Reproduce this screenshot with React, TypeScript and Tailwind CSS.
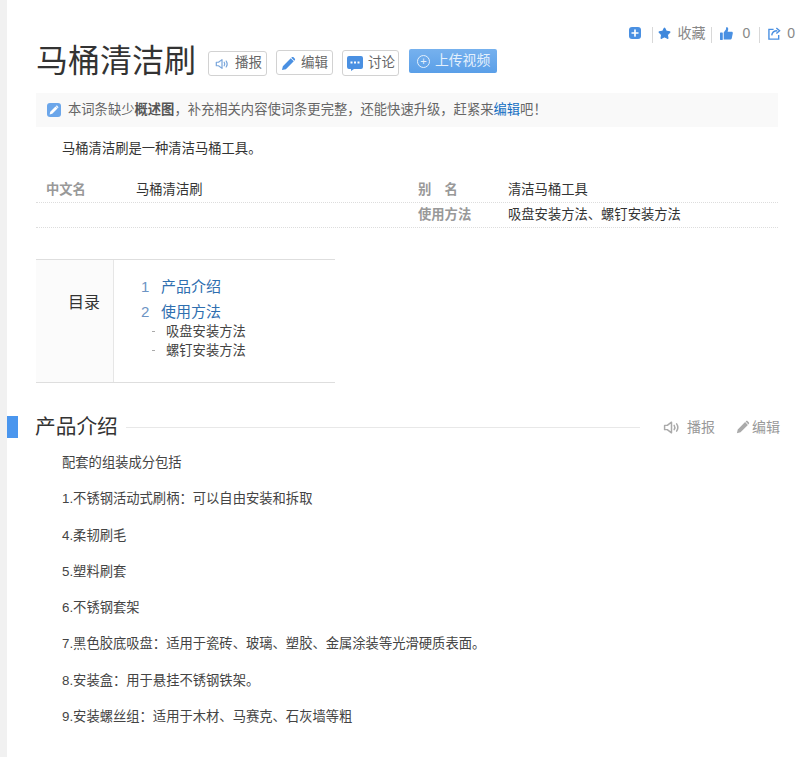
import { Plus, Star } from "lucide-react"

const cjk = { fontFamily: '"Liberation Sans", "Noto Sans CJK SC", sans-serif' }

function Speaker({ className }: { className: string }) {
  return (
    <svg viewBox="0 0 16 16" className={className} fill="none" stroke="currentColor" strokeWidth="1.4">
      <path d="M1.5 6v4h2.5l4 3V3l-4 3z" strokeLinejoin="round" />
      <path d="M10.5 6c.8 1.2.8 2.8 0 4M12.8 4.6c1.4 2.1 1.4 4.7 0 6.8" strokeLinecap="round" />
    </svg>
  )
}

function PencilSolid({ className }: { className: string }) {
  return (
    <svg viewBox="0 0 16 16" className={className} fill="currentColor">
      <path d="M1 15l1-4.2L10.4 2.4l3.2 3.2L5.2 14zM11.4 1.4c.6-.6 1.4-.6 2 0l1.2 1.2c.6.6.6 1.4 0 2l-.4.4L11 1.8z" />
    </svg>
  )
}

function Bubble() {
  return (
    <svg viewBox="0 0 16 15" className="h-[15px] w-[16px] text-[#4a90e2]" fill="currentColor">
      <path d="M2 0h12a2 2 0 0 1 2 2v9a2 2 0 0 1-2 2H7l-3 2v-2H2a2 2 0 0 1-2-2V2a2 2 0 0 1 2-2z" />
      <rect x="3.500" y="5.500" width="2" height="2" fill="#fff" />
      <rect x="7" y="5.500" width="2" height="2" fill="#fff" />
      <rect x="10.500" y="5.500" width="2" height="2" fill="#fff" />
    </svg>
  )
}

function ThumbSolid({ className }: { className: string }) {
  return (
    <svg viewBox="0 0 14 14" className={className} fill="currentColor">
      <rect x="0" y="6" width="3" height="8" rx="0.5" />
      <path d="M4 6l2.500-3.500V.8c0-.6 1.900-.8 2.300.8.2 1-.2 2.300-.6 3.400h4.300c.9 0 1.500.7 1.300 1.600l-1.200 5.800c-.2.700-.7 1.100-1.400 1.100H4z" />
    </svg>
  )
}

function ShareBox({ className }: { className: string }) {
  return (
    <svg viewBox="0 0 14 14" className={className} fill="none" stroke="currentColor" strokeWidth="1.500">
      <path d="M6 2.500H1v10.500h10.500V8.500" />
      <path d="M4 9c.4-3 2.800-5 6-5M9 1l3.500 3L9 7" />
    </svg>
  )
}

function TitleButton({ icon, label, className }: { icon: React.ReactNode; label: string; className: string }) {
  return (
    <span className={`flex items-center rounded-[3px] border border-[#d2d2d2] bg-white text-[13.5px] text-[#666] ${className}`}>
      {icon}
      {label}
    </span>
  )
}

function Divider({ className }: { className: string }) {
  return <span className={`mt-[3px] h-[16px] w-px bg-[#d8d8d8] ${className}`} />
}

function InfoRow({ label, value }: { label: string; value: string }) {
  return (
    <div className="flex">
      <span className="w-[100px] pl-[10px] font-bold text-[#999]">{label}</span>
      <span className="text-[#333]">{value}</span>
    </div>
  )
}

const paragraphs = [
  "配套的组装成分包括",
  "1.不锈钢活动式刷柄：可以自由安装和拆取",
  "4.柔韧刷毛",
  "5.塑料刷套",
  "6.不锈钢套架",
  "7.黑色胶底吸盘：适用于瓷砖、玻璃、塑胶、金属涂装等光滑硬质表面。",
  "8.安装盒：用于悬挂不锈钢铁架。",
  "9.安装螺丝组：适用于木材、马赛克、石灰墙等粗",
]

export default function App() {
  return (
    <div className="h-[757px] w-[800px] overflow-hidden bg-white text-[13.3px] text-[#333]" style={cjk}>
      <div className="h-full border-l-[7px] border-[#f1f1f1]">
        <div className="flex h-[40px] items-center justify-end pt-[26px] pr-[5px] text-[14px] leading-[14px] text-[#888]">
          <span className="flex h-[12px] w-[12px] items-center justify-center rounded-[3px] bg-[#4a90e2]">
            <Plus className="h-[10px] w-[10px] text-white" strokeWidth={4} />
          </span>
          <Divider className="ml-[11px] mr-[5px]" />
          <Star className="mr-[6px] h-[13px] w-[13px] fill-[#3f88dc] text-[#3f88dc]" />
          <span>收藏</span>
          <Divider className="ml-[6px] mr-[8px]" />
          <ThumbSolid className="mr-[9px] h-[13px] w-[13px] text-[#4a90e2]" />
          <span>0</span>
          <Divider className="ml-[9px] mr-[8px]" />
          <ShareBox className="mr-[6px] h-[13px] w-[13px] text-[#4a90e2]" />
          <span>0</span>
        </div>

        <div className="pl-[29px] pr-[22px]">
          <div className="flex h-[42px] items-center">
            <h1 className="mr-[12px] text-[32px] leading-[42px] font-normal text-[#333]">马桶清洁刷</h1>
            <TitleButton className="mt-[5px] h-[25px] w-[59px] gap-[6px] pl-[6px]" label="播报" icon={<Speaker className="h-[14px] w-[14px] text-[#7ba7dc]" />} />
            <TitleButton className="ml-[9px] mt-[2px] h-[25px] w-[57px] gap-[5px] pl-[4px] pt-[2px]" label="编辑" icon={<PencilSolid className="h-[15px] w-[15px] text-[#4a90e2]" />} />
            <TitleButton className="ml-[9px] mt-[4px] h-[26px] w-[57px] gap-[5px] pl-[4px]" label="讨论" icon={<Bubble />} />
            <span className="ml-[10px] flex h-[24px] w-[88px] items-center gap-[5px] rounded-[2px] bg-gradient-to-b from-[#76b1ee] to-[#5a9fe8] pl-[8px] text-[13.8px] text-[#e4f0fc]">
              <span className="flex h-[13px] w-[13px] items-center justify-center rounded-full border border-[#e4f0fc] text-[11px] leading-none">+</span>
              上传视频
            </span>
          </div>

          <div className="mt-[11px] flex h-[34px] items-center bg-[#f9f9f9] pl-[11px] text-[#666]">
            <span className="mr-[7px] flex h-[14px] w-[14px] items-center justify-center rounded-[3px] bg-[#6ba6ea]">
              <PencilSolid className="h-[10px] w-[10px] text-white" />
            </span>
            本词条缺少<b className="text-[#555]">概述图</b>，补充相关内容使词条更完整，还能快速升级，赶紧来<span className="text-[#136ec2]">编辑</span>吧！
          </div>

          <p className="mt-[12px] pl-[26px] leading-[20px]">马桶清洁刷是一种清洁马桶工具。</p>

          <div className="mt-[19px] leading-[24px]">
            <div className="grid grid-cols-[372px_1fr] border-b border-dotted border-[#ddd]">
              <InfoRow label="中文名" value="马桶清洁刷" />
              <InfoRow label="别　名" value="清洁马桶工具" />
            </div>
            <div className="grid grid-cols-[372px_1fr] border-b border-dotted border-[#ddd]">
              <span />
              <InfoRow label="使用方法" value="吸盘安装方法、螺钉安装方法" />
            </div>
          </div>

          <div className="mt-[31px] flex h-[124px] w-[299px] border-y border-[#dedede]">
            <div className="w-[78px] border-r border-[#e6e6e6] bg-[#fbfbfb] pt-[33px] pr-[13px] text-right text-[16px] leading-[20px] text-[#333]">目录</div>
            <div className="pt-[17px] pl-[27px]">
              <div className="flex h-[20px] items-center text-[15px] text-[#2f6fb0]">
                <span className="w-[20px] text-[#6d94c4]">1</span>产品介绍
              </div>
              <div className="mt-[6px] flex h-[19px] items-center text-[15px] text-[#2f6fb0]">
                <span className="w-[20px] text-[#6d94c4]">2</span>使用方法
              </div>
              <div className="flex h-[19px] items-center pl-[11px] text-[#444]">
                <span className="mr-[11px] h-px w-[3px] bg-[#aaa]" />吸盘安装方法
              </div>
              <div className="flex h-[19px] items-center pl-[11px] text-[#444]">
                <span className="mr-[11px] h-px w-[3px] bg-[#aaa]" />螺钉安装方法
              </div>
            </div>
          </div>
        </div>

        <div className="relative mt-[33px] flex h-[22px] items-center pl-[28px] pr-[20px]">
          <span className="absolute top-0 left-0 h-[22px] w-[11px] bg-[#4a96ee]" />
          <h2 className="mr-[8px] text-[20.700px] leading-[22px] font-normal text-[#333]">产品介绍</h2>
          <span className="h-px flex-1 bg-[#e8e8e8]" />
          <span className="ml-[23px] flex items-center text-[14px] text-[#999]">
            <Speaker className="mr-[7px] h-[17px] w-[17px] text-[#aaa]" />播报
            <PencilSolid className="ml-[21px] mr-[2px] h-[14px] w-[14px] text-[#aaa]" />编辑
          </span>
        </div>

        <div className="mt-[15px] pl-[55px]">
          {paragraphs.map((text) => (
            <p key={text} className="mb-[16.300px] leading-[20px] text-[#444]">{text}</p>
          ))}
        </div>
      </div>
    </div>
  )
}
